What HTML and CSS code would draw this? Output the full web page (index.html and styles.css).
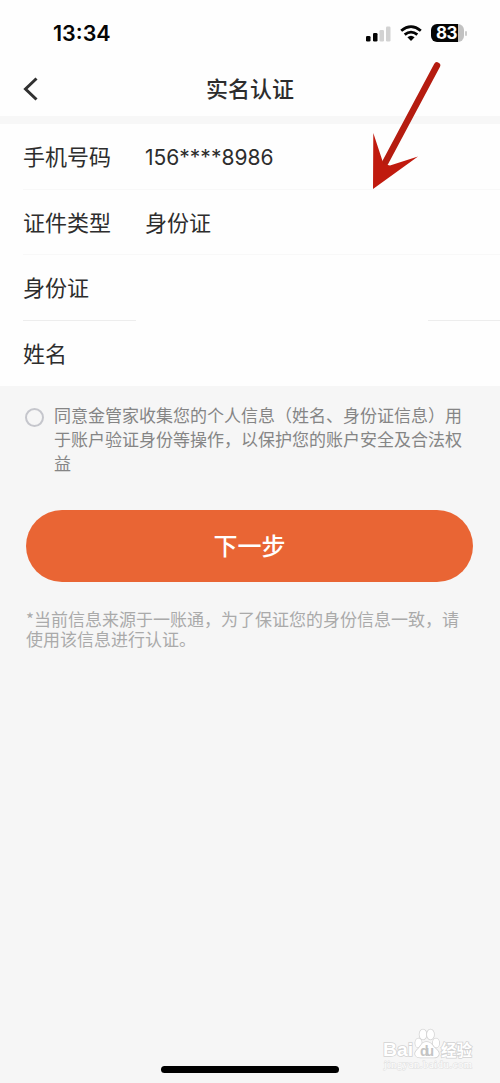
FILE: index.html
```html
<!DOCTYPE html>
<html lang="zh-CN">
<head>
<meta charset="utf-8">
<title>实名认证</title>
<link rel="stylesheet" href="styles.css">
</head>
<body>
<div class="screen">
  <header class="status">
    <span class="clock">13:34</span>
    <div class="indicators">
      <svg class="signal" width="26" height="17" viewBox="0 0 26 17">
        <rect x="1" y="11" width="4.500" height="5.500" rx="1.300" fill="#050505"/>
        <rect x="8" y="8" width="4.500" height="8.500" rx="1.300" fill="#050505"/>
        <rect x="14.500" y="5" width="4.500" height="11.500" rx="1.300" fill="#d2d2d2"/>
        <rect x="21" y="1.500" width="4.500" height="15" rx="1.300" fill="#d2d2d2"/>
      </svg>
      <svg class="wifi" width="22" height="16" viewBox="0 0 22 16">
        <g fill="none" stroke="#050505" stroke-width="2.8">
          <path d="M1.200 5.700Q11-2.500 20.800 5.700"/>
          <path d="M4.700 9.700Q11 4.500 17.300 9.700"/>
        </g>
        <path d="M7.400 12.300Q11 9.300 14.600 12.300L11 16Z" fill="#050505"/>
      </svg>
      <div class="battery">
        <span class="battery-level">83</span>
      </div>
      <span class="battery-tip"></span>
    </div>
  </header>
  <nav class="nav">
    <svg class="back" width="15" height="24" viewBox="0 0 15 24">
      <path d="M13.500 1.500L2.500 12L13.500 22.500" fill="none" stroke="#303030" stroke-width="3"/>
    </svg>
    <h1 class="title">实名认证</h1>
  </nav>
  <section class="form">
    <div class="row"><span class="label">手机号码</span><span class="phone">156****8986</span></div>
    <div class="row"><span class="label">证件类型</span><span>身份证</span></div>
    <div class="row row-broken"><span class="label">身份证</span></div>
    <div class="row row-last"><span class="label">姓名</span></div>
  </section>
  <main class="content">
    <div class="agreement">
      <span class="radio"></span>
      <p class="terms">同意金管家收集您的个人信息（姓名、身份证信息）用<br>于账户验证身份等操作，以保护您的账户安全及合法权<br>益</p>
    </div>
    <button class="next" type="button">下一步</button>
    <p class="note">*当前信息来源于一账通，为了保证您的身份信息一致，请<br>使用该信息进行认证。</p>
  </main>
  <span class="home-bar"></span>
  <svg class="pointer" width="82" height="132" viewBox="0 0 82 132">
    <path d="M67 5.500L15 103" fill="none" stroke="#b51c10" stroke-width="6.500" stroke-linecap="round"/>
    <path d="M3 129L3.300 73L13.500 104L20 105.500L48 96.500Z" fill="#c01a0e"/>
  </svg>
  <svg class="watermark" width="96" height="50" viewBox="0 0 96 50">
    <g class="wm-text">
      <text x="3" y="32" font-size="19" textLength="30" lengthAdjust="spacingAndGlyphs">Bai</text>
      <text class="wm-cjk" x="61" y="32" font-size="15.500" textLength="31">经验</text>
      <text class="wm-url" x="4" y="44" font-size="10.500" textLength="88">jingyan.baidu.com</text>
    </g>
    <g class="wm-paw">
      <ellipse cx="38.500" cy="19" rx="3.200" ry="4.500"/>
      <ellipse cx="43" cy="10.500" rx="3.500" ry="5"/>
      <ellipse cx="50.500" cy="10.500" rx="3.500" ry="5"/>
      <ellipse cx="56" cy="19" rx="3.200" ry="4.500"/>
      <path d="M46.500 18C41 18 41 23 37 26C33 30 36 34 41 33.500H53C59 34 61 29 56 25C52 22 52 18 46.500 18Z"/>
    </g>
    <text class="wm-du" x="40" y="31.500" font-size="14" textLength="14">du</text>
  </svg>
</div>
</body>
</html>
```
FILE: styles.css
```css
* { box-sizing: border-box; }
body {
  margin: 0;
  background: #f6f6f6;
  color: #2d2d2d;
  font-family: "Liberation Sans", "Noto Sans CJK SC", sans-serif;
}
.screen {
  position: relative;
  width: 500px;
  height: 1083px;
  display: flex;
  flex-direction: column;
  overflow: hidden;
}
.status {
  height: 66px;
  padding: 0 33px 0 53px;
  display: flex;
  align-items: center;
  justify-content: space-between;
  background: #fefefe;
}
.clock {
  color: #050505;
  font: 600 21.5px/30px Inter, sans-serif;
}
.indicators { display: flex; align-items: center; }
.signal { margin-right: 9px; }
.wifi { margin-right: 9px; }
.battery {
  width: 33px;
  height: 18px;
  border-radius: 6px;
  background: linear-gradient(90deg, #050505 27px, #c2c2c2 27px);
}
.battery-level {
  display: block;
  padding-left: 5px;
  color: #fff;
  font: 700 17px/18px Inter, sans-serif;
  letter-spacing: -0.5px;
}
.battery-tip { width: 2px; height: 5px; margin-left: 1px; border-radius: 1px; background: #ccc; }
.nav {
  height: 50px;
  padding-left: 23px;
  display: grid;
  grid-template-columns: 15px 1fr 38px;
  align-items: center;
  background: #fefefe;
}
.back { margin-top: -5px; }
.title {
  margin: -3px 0 0;
  text-align: center;
  font-size: 22px;
  line-height: 32px;
  font-weight: 500;
}
.form {
  height: 270px;
  border-top: 8px solid #f7f7f7;
  background: #fefefe;
  display: grid;
  grid-template-rows: repeat(4, 65.5px);
}
.row {
  margin-left: 23px;
  padding-top: 4px;
  display: grid;
  grid-template-columns: 122px 1fr;
  align-items: center;
  border-bottom: 1px solid #f8f8f8;
  font-size: 22px;
  line-height: 32px;
}
.row-broken {
  border-bottom-color: transparent;
  background: linear-gradient(90deg, #ededed 113px, transparent 113px, transparent 405px, #ededed 405px) 0 100% / 100% 1px no-repeat border-box;
}
.row-last { border-bottom: 0; }
.phone { font-family: Inter, sans-serif; font-size: 21px; }
.content { flex: 1; padding: 17px 26px 0; }
.agreement { display: flex; }
.radio {
  width: 19px;
  height: 19px;
  margin: 5px 10px 0 -1px;
  border: 2px solid #c5c6cc;
  border-radius: 50%;
}
.terms {
  margin: 0;
  color: #858585;
  font: 17px/24px "Noto Sans CJK SC", sans-serif;
  white-space: nowrap;
}
.next {
  display: block;
  width: 447px;
  height: 72px;
  margin-top: 35px;
  padding: 0 0 2px;
  border: 0;
  border-radius: 36px;
  background: #e96534;
  color: #fff;
  font: 500 24px/36px "Noto Sans CJK SC", sans-serif;
}
.note {
  margin: 27px 0 0;
  color: #aaa;
  font: 17px/20px "Noto Sans CJK SC", sans-serif;
  white-space: nowrap;
}
.home-bar {
  position: absolute;
  left: 161px;
  top: 1066px;
  width: 178px;
  height: 7px;
  border-radius: 4px;
  background: #000;
}
.pointer { position: absolute; left: 370px; top: 60px; }
.watermark { position: absolute; left: 380px; top: 1024px; }
.wm-text, .wm-paw {
  fill: #fff;
  stroke: #d2d2d2;
  stroke-width: 1.5px;
  paint-order: stroke;
}
.wm-text { font-family: "Liberation Sans", sans-serif; font-weight: 700; }
.wm-cjk { font-family: "Noto Sans CJK SC", sans-serif; }
.wm-url { font-family: "Liberation Serif", serif; font-weight: 400; stroke-width: 1px; stroke: #e0e0e0; }
.wm-du { font-family: "Liberation Sans", sans-serif; font-weight: 700; fill: #c4c4c4; }
```
